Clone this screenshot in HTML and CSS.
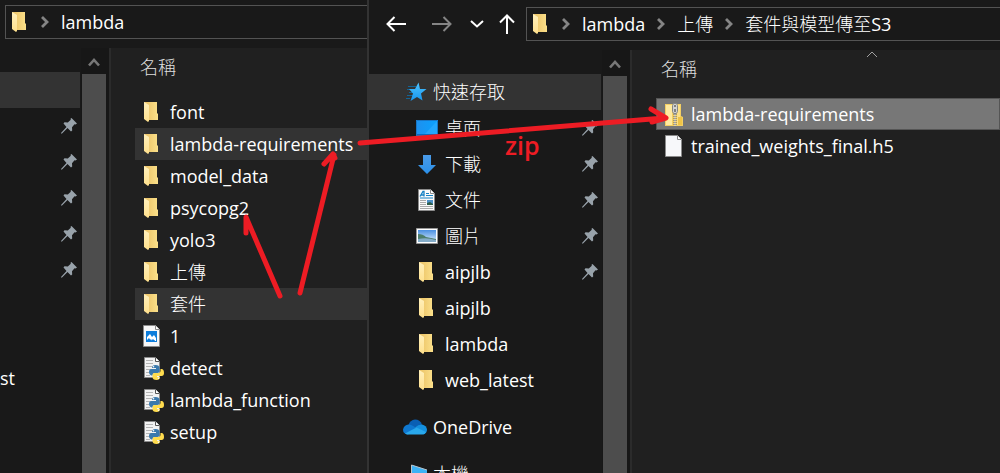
FILE: index.html
```html
<!DOCTYPE html>
<html lang="zh-Hant">
<head>
<meta charset="utf-8">
<title>lambda</title>
<link rel="stylesheet" href="styles.css">
</head>
<body>
<svg class="defs" aria-hidden="true">
  <defs>
    <linearGradient id="gFolder" x1="0" x2="1"><stop offset="0" stop-color="#eac063"/><stop offset="1" stop-color="#fbe08a"/></linearGradient>
    <linearGradient id="gFlap" x1="0" x2="0" y1="0" y2="1"><stop offset="0" stop-color="#fff0bd"/><stop offset="1" stop-color="#ffe08c"/></linearGradient>
    <linearGradient id="gDesk" x1="0" x2="1"><stop offset="0" stop-color="#1e90ee"/><stop offset="1" stop-color="#0aa2ff"/></linearGradient>
    <linearGradient id="gDown" x1="0" x2="0" y1="0" y2="1"><stop offset="0" stop-color="#4a9be8"/><stop offset="1" stop-color="#2a90ea"/></linearGradient>
    <linearGradient id="gSky" x1="0" x2="0" y1="0" y2="1"><stop offset="0" stop-color="#4a8fe0"/><stop offset="1" stop-color="#dcefff"/></linearGradient>
    <linearGradient id="gStar" x1="0" x2="0" y1="0" y2="1"><stop offset="0" stop-color="#4cc3ff"/><stop offset="1" stop-color="#1795ee"/></linearGradient>
    <symbol id="folder" viewBox="0 0 24 24">
      <path d="M4 2h13v11l1 1v6H6z" fill="url(#gFolder)"/>
      <path d="M4 2l5 3v16l-1 1-4-3z" fill="url(#gFlap)"/>
    </symbol>
    <symbol id="zip" viewBox="0 0 24 24">
      <path d="M4 2h16v12l2 1v9H4z" fill="#f3cf63"/>
      <path d="M5 3h6v20H5z" fill="#ffeaa0"/>
      <path d="M16 3h3v20h-3z" fill="#fbe08a"/>
      <path d="M17 15h4v8h-4z" fill="#f0c447"/>
      <path d="M12.500 1.500h3l1 2v6l-1 2h-3l-1-2v-6z" fill="#d2d2d2" stroke="#858585"/>
      <path d="M14 3v2M14 7v3" stroke="#666" stroke-width="1.500"/>
      <path d="M14 12v12" stroke="#666" stroke-width="3" stroke-dasharray="1 1"/>
      <path d="M14 12v12" stroke="#ddd" stroke-width="1"/>
    </symbol>
    <symbol id="blank" viewBox="0 0 24 24">
      <path d="M4.500 1.500h12l4 4v17h-16z" fill="#f7f8fa" stroke="#8b8b8b"/>
      <path d="M16.500 1.500v4h4" fill="#fff" stroke="#8b8b8b"/>
    </symbol>
    <symbol id="image" viewBox="0 0 24 24">
      <path d="M3.500 1.500h12l4 4v17h-16z" fill="#f7f7f7" stroke="#8b8b8b"/>
      <path d="M15.500 1.500v4h4" fill="#fff" stroke="#8b8b8b"/>
      <path d="M6 7h11v11H6z" fill="#0d7ddb"/>
      <path d="M7 17v-4l3-3 2 3 2-2 2 3v3h-1l-2-2-2 2-2-3-2 2v2z" fill="#fff"/>
      <path d="M9 17l2-2 1 2zM13 17l1-1 1 1z" fill="#0d7ddb"/>
    </symbol>
    <symbol id="python" viewBox="0 0 24 24">
      <path d="M4.500 1.500h11l4 4v16h-15z" fill="#f3f3f3" stroke="#8b8b8b"/>
      <path d="M15.500 1.500v4h4" fill="#fff" stroke="#555"/>
      <path d="M6 4.500h7M6 7.500h7M6 10.500h12M6 13.500h5M6 16.500h4M6 19.500h4" stroke="#b4b4b4"/>
      <path d="M12 12q0-3 3.500-3 4 0 4 3v3q0 2-2 2h-3q-2 0-2 2.500H11q-2-.5-2-3.500 0-3 2.500-3H16v-1z" fill="#3a79ad"/>
      <path d="M20.500 13H22q2 .5 2 4 0 3-2.500 3H17v1h3q0 3-3.500 3-4 0-4-3v-2q0-2 2-2h4q2 0 2-2z" fill="#ffdc4e"/>
      <circle cx="13.500" cy="10.800" r=".8" fill="#fff"/><circle cx="18.500" cy="22.300" r=".8" fill="#fff"/>
    </symbol>
    <symbol id="pin" viewBox="0 0 16 16">
      <path d="M10.500 0L16 5.500l-1.500 1-1-.3-2.500 3 .2 3.300-1.200 1L6.500 10 1 15.500H0V15l5.500-6-3-3.500 1-1.200 3.300.2 3-2.700-.3-1z" fill="#98a2aa"/>
    </symbol>
    <symbol id="up" viewBox="0 0 12 10"><path d="M1 8.500l5-5.500 5 5.500" fill="none" stroke="#777" stroke-width="2.600"/></symbol>
    <symbol id="sep" viewBox="0 0 10 12"><path d="M2 1l5 5-5 5" fill="none" stroke="#858585" stroke-width="2.800"/></symbol>
    <symbol id="star" viewBox="0 0 24 24">
      <path d="M5 6.500h8M4 9.500h6M4 15.500h6M6 12.500h4M3 18.500h4" stroke="#146494"/>
      <path d="M15.500 2.500l1.500 6.500h6.500l-5.500 4.500 1.500 7-5.500-3.500-6.500 4 2.500-7.500L6 9h6z" fill="url(#gStar)"/>
    </symbol>
    <symbol id="desktop" viewBox="0 0 24 24">
      <path d="M1 4h22v16H1z" fill="url(#gDesk)"/><path d="M23 4v16H8z" fill="#35b0ff" opacity=".5"/><path d="M1 18h22v2H1z" fill="#096bbd"/><path d="M1.500 4.500h21v15h-21z" fill="none" stroke="#1876c6"/>
    </symbol>
    <symbol id="download" viewBox="0 0 24 24"><path d="M8 3h8v10h5l-9 9-9-9h5z" fill="url(#gDown)"/></symbol>
    <symbol id="document" viewBox="0 0 24 24">
      <path d="M3.500 1.500h12l4 4v17h-16z" fill="#fafafa" stroke="#8b8b8b"/><path d="M15.500 1.500v4h4" fill="#fff" stroke="#8b8b8b"/>
      <path d="M5 8.500l3-5h1v5M6 7h3" fill="none" stroke="#1681c4" stroke-width="1.300"/>
      <path d="M11 5.500h3M11 7.500h7M5 10h13" stroke="#1681c4"/>
      <path d="M5 12.500h6M5 14.500h6M5 16.500h6M5 18.500h13M5 20.500h13" stroke="#aaa"/>
      <path d="M12 12h6v5h-6z" fill="#4e91c9"/><path d="M12 15l3-1 3 2v1h-6z" fill="#2e5d49"/>
    </symbol>
    <symbol id="picture" viewBox="0 0 24 24">
      <path d="M1.500 4.500h21v15h-21z" fill="#fff" stroke="#999"/><path d="M3 6h18v12H3z" fill="url(#gSky)"/>
      <path d="M3 10q5 0 8 3 5 1 10 2v3H3z" fill="#4c7d6a"/><path d="M3 15q9-2 18 1v2H3z" fill="#84acc8"/>
    </symbol>
    <symbol id="cloud" viewBox="0 0 24 16">
      <path d="M5.500 6Q7 1 12 .5q5 0 7 5l-7 5z" fill="#0a5fb4"/>
      <path d="M5 15.500q-5-.5-5-5Q1 6 5.500 5.500 9 5.500 13 9L5 15.500z" fill="#0f78d0"/>
      <path d="M12 8.500q3-3 7-3 4.500 1 5 5 0 4-4 5z" fill="#1490df"/>
      <path d="M2 14.500L13.500 8.500 23 13q-1 2.500-4 2.500H5q-2 0-3-1z" fill="#29a8ec"/>
    </symbol>
    <symbol id="pc" viewBox="0 0 24 24"><path d="M9 3l15 5v12L9 21z" fill="#3db2f5"/><path d="M8.500 21V3L24 8" fill="none" stroke="#b8c4cc"/></symbol>
  </defs>
</svg>

<main class="desktop">
  <section class="window window-back" aria-label="lambda">
    <header class="toolbar">
      <nav class="address">
        <svg class="icon"><use href="#folder"/></svg>
        <svg class="sep"><use href="#sep"/></svg><a href="#">lambda</a>
      </nav>
    </header>
    <div class="body">
      <nav class="side">
        <a class="side-item current" href="#" aria-label="快速存取"></a>
        <a class="side-item" href="#" aria-label="桌面"><svg class="pin"><use href="#pin"/></svg></a>
        <a class="side-item" href="#" aria-label="下載"><svg class="pin"><use href="#pin"/></svg></a>
        <a class="side-item" href="#" aria-label="文件"><svg class="pin"><use href="#pin"/></svg></a>
        <a class="side-item" href="#" aria-label="圖片"><svg class="pin"><use href="#pin"/></svg></a>
        <a class="side-item" href="#" aria-label="aipjlb"><svg class="pin"><use href="#pin"/></svg></a>
        <a class="side-item" href="#" aria-label="aipjlb"></a>
        <a class="side-item" href="#" aria-label="lambda"></a>
        <a class="side-item" href="#">st</a>
      </nav>
      <div class="scroll"><svg class="scroll-up"><use href="#up"/></svg><div class="thumb"></div></div>
      <div class="files">
        <button class="column">名稱</button>
        <ul class="list">
          <li class="file"><svg class="icon"><use href="#folder"/></svg>font</li>
          <li class="file marked"><svg class="icon"><use href="#folder"/></svg>lambda-requirements</li>
          <li class="file"><svg class="icon"><use href="#folder"/></svg>model_data</li>
          <li class="file"><svg class="icon"><use href="#folder"/></svg>psycopg2</li>
          <li class="file"><svg class="icon"><use href="#folder"/></svg>yolo3</li>
          <li class="file"><svg class="icon"><use href="#folder"/></svg>上傳</li>
          <li class="file marked"><svg class="icon"><use href="#folder"/></svg>套件</li>
          <li class="file"><svg class="icon"><use href="#image"/></svg>1</li>
          <li class="file"><svg class="icon"><use href="#python"/></svg>detect</li>
          <li class="file"><svg class="icon"><use href="#python"/></svg>lambda_function</li>
          <li class="file"><svg class="icon"><use href="#python"/></svg>setup</li>
        </ul>
      </div>
    </div>
  </section>

  <section class="window window-front" aria-label="套件與模型傳至S3">
    <header class="toolbar">
      <div class="history">
        <button aria-label="Back"><svg width="20" height="16" viewBox="0 0 20 16"><path d="M20 8H2M8.500 1L1.500 8l7 7" fill="none" stroke="#fff" stroke-width="2"/></svg></button>
        <button aria-label="Forward"><svg width="20" height="16" viewBox="0 0 20 16"><path d="M0 8h18M11.500 1l7 7-7 7" fill="none" stroke="#858585" stroke-width="2"/></svg></button>
        <button aria-label="Recent"><svg width="14" height="8" viewBox="0 0 14 8"><path d="M1 1l6 5.500L13 1" fill="none" stroke="#fff" stroke-width="2"/></svg></button>
        <button aria-label="Up"><svg width="16" height="20" viewBox="0 0 16 20"><path d="M8 20V2M1 8.500l7-7 7 7" fill="none" stroke="#fff" stroke-width="2"/></svg></button>
      </div>
      <nav class="address">
        <svg class="icon"><use href="#folder"/></svg>
        <svg class="sep"><use href="#sep"/></svg><a href="#">lambda</a>
        <svg class="sep"><use href="#sep"/></svg><a href="#">上傳</a>
        <svg class="sep"><use href="#sep"/></svg><a href="#">套件與模型傳至S3</a>
      </nav>
    </header>
    <div class="body">
      <nav class="side">
        <a class="side-item root current" href="#"><svg class="icon"><use href="#star"/></svg>快速存取</a>
        <a class="side-item" href="#"><svg class="icon"><use href="#desktop"/></svg>桌面<svg class="pin"><use href="#pin"/></svg></a>
        <a class="side-item" href="#"><svg class="icon"><use href="#download"/></svg>下載<svg class="pin"><use href="#pin"/></svg></a>
        <a class="side-item" href="#"><svg class="icon"><use href="#document"/></svg>文件<svg class="pin"><use href="#pin"/></svg></a>
        <a class="side-item" href="#"><svg class="icon"><use href="#picture"/></svg>圖片<svg class="pin"><use href="#pin"/></svg></a>
        <a class="side-item" href="#"><svg class="icon"><use href="#folder"/></svg>aipjlb<svg class="pin"><use href="#pin"/></svg></a>
        <a class="side-item" href="#"><svg class="icon"><use href="#folder"/></svg>aipjlb</a>
        <a class="side-item" href="#"><svg class="icon"><use href="#folder"/></svg>lambda</a>
        <a class="side-item" href="#"><svg class="icon"><use href="#folder"/></svg>web_latest</a>
        <a class="side-item root spaced" href="#"><svg class="icon"><use href="#cloud"/></svg>OneDrive</a>
        <a class="side-item root spaced" href="#"><svg class="icon"><use href="#pc"/></svg>本機</a>
      </nav>
      <div class="scroll"><svg class="scroll-up"><use href="#up"/></svg><div class="thumb"></div></div>
      <div class="files">
        <button class="column">名稱<svg class="sort" viewBox="0 0 12 8"><path d="M1 7l5-5 5 5" fill="none" stroke="#a0a0a0"/></svg></button>
        <ul class="list">
          <li class="file selected"><svg class="icon"><use href="#zip"/></svg>lambda-requirements</li>
          <li class="file"><svg class="icon"><use href="#blank"/></svg>trained_weights_final.h5</li>
        </ul>
      </div>
    </div>
  </section>

  <svg class="ink" width="1000" height="473" viewBox="0 0 1000 473">
    <path d="M280 296L246 217V233M300 293L334 155M324 164L333 154L335 158M360 143L664 118M651 109L666 118L652 122"/>
    <text x="505" y="155">zip</text>
  </svg>
</main>
</body>
</html>
```
FILE: styles.css
```css
* { box-sizing: border-box; }

body {
  margin: 0;
  background: #191919;
  color: #fff;
  font: 18px/24px "Open Sans", "Noto Sans CJK TC Light", "Noto Sans CJK TC DemiLight", "Noto Sans CJK TC", sans-serif;
}

a { color: inherit; text-decoration: none; }
button { padding: 0; border: 0; background: none; color: inherit; font: inherit; }
svg { display: block; flex: none; }
.defs { position: absolute; width: 0; height: 0; }

.desktop {
  position: relative;
  display: grid;
  grid-template-columns: 367px minmax(0, 1fr);
  height: 100vh;
  overflow: hidden;
}

.window {
  display: flex;
  flex-direction: column;
  min-width: 0;
  min-height: 0;
  overflow: hidden;
  background: #191919;
}
.window-front { border-left: 2px solid #333; }

.toolbar { display: flex; flex: none; }
.window-back .toolbar { padding: 5px 0 9px 5px; }
.window-front .toolbar { padding: 7px 0 9px; }

.address {
  display: flex;
  flex: 1;
  align-items: center;
  height: 34px;
  border: 1px solid #535353;
  border-right: 0;
  padding-left: 2px;
  white-space: nowrap;
}
.address .sep { margin: 0 11px; }
.address .icon + .sep { margin-left: 8px; }
.icon { width: 24px; height: 24px; }
.sep { width: 10px; height: 12px; }

.history {
  display: flex;
  align-items: center;
  width: 157px;
  padding-left: 17px;
}
.history button { display: grid; place-items: center; }
.history button:nth-child(2) { margin-left: 26px; }
.history button:nth-child(3) { margin-left: 18px; }
.history button:nth-child(4) { margin-left: 15px; }

.body { display: flex; flex: 1; min-height: 0; }

.side {
  display: flex;
  flex: none;
  flex-direction: column;
  padding-top: 24px;
  overflow: hidden;
}
.window-back .side { width: 81px; }
.window-front .side { width: 233px; }

.side-item {
  display: flex;
  flex: none;
  align-items: center;
  gap: 6px;
  height: 36px;
  padding-right: 4px;
}
.window-front .side-item { padding-left: 46px; }
.window-front .side-item.root { padding-left: 34px; }
.side-item.current { margin-right: 1px; background: #333; }
.side-item.spaced { margin-top: 11px; }
.pin { width: 16px; height: 16px; margin-left: auto; }

.scroll {
  display: flex;
  flex: none;
  flex-direction: column;
  align-items: center;
  width: 28px;
  padding-right: 2px;
  background: #171717;
}
.scroll-up { width: 12px; height: 10px; margin: 9px 0 7px; }
.thumb { flex: 1; width: 24px; background: #4d4d4d; }

.files {
  flex: 1;
  min-width: 0;
  border-left: 2px solid #2b2b2b;
  background: #202020;
}
.column {
  position: relative;
  display: block;
  width: 100%;
  height: 38px;
  padding-left: 29px;
  color: #dedede;
  text-align: left;
}
.sort { position: absolute; top: 0; left: 234px; width: 12px; height: 8px; }
.list {
  margin: 0;
  padding: 10px 0 0 24px;
  list-style: none;
}
.file {
  display: flex;
  align-items: center;
  gap: 6px;
  height: 32px;
  padding-left: 5px;
  white-space: nowrap;
}
.marked { background: #333; }
.selected { background: #777; outline: 1px solid #555; outline-offset: -1px; }

.ink { position: absolute; top: 0; left: 0; pointer-events: none; }
.ink path {
  fill: none;
  stroke: #ed1c24;
  stroke-width: 5;
  stroke-linecap: round;
  stroke-linejoin: round;
}
.ink text { fill: #ed1c24; font-size: 25px; font-weight: 600; }
```
